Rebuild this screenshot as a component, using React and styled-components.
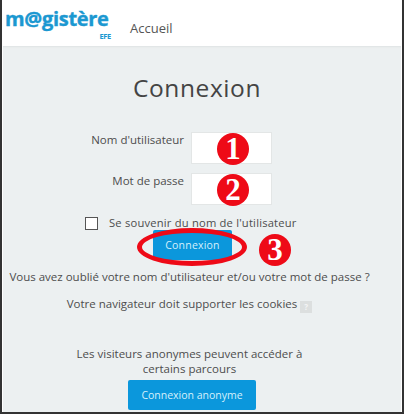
import React from 'react';
import styled, { createGlobalStyle } from 'styled-components';

const GlobalStyle = createGlobalStyle`
  html, body {
    margin: 0;
    padding: 0;
    background: #fff;
  }
  * {
    box-sizing: border-box;
  }
`;

const Frame = styled.div`
  width: 404px;
  height: 414px;
  border: solid #333;
  border-width: 0 2px 2px 2px;
  padding: 0 1px 0 1px;
  background: #fff;
  font-family: 'Open Sans', sans-serif;
  color: #444;
  display: flex;
  flex-direction: column;
`;

const Header = styled.header`
  height: 46px;
  display: flex;
  align-items: flex-start;
  flex-shrink: 0;
`;

const Logo = styled.div`
  width: 106px;
  margin-left: 2px;
  padding-top: 5px;
  display: flex;
  flex-direction: column;
  align-items: flex-end;
  color: #1b98d1;
`;

const LogoName = styled.div`
  font-family: 'Open Sans', sans-serif;
  font-size: 20px;
  font-weight: 700;
  line-height: 27px;
  letter-spacing: -0.3px;
  -webkit-text-stroke: 0.4px #1b98d1;
  width: 100%;
  white-space: nowrap;
`;

const LogoSub = styled.div`
  font-size: 7.5px;
  font-weight: 700;
  line-height: 8px;
  letter-spacing: -0.3px;
`;

const NavLink = styled.a`
  margin: 20px 0 0 19px;
  font-size: 13px;
  line-height: 17px;
  color: #555;
`;

const Main = styled.main`
  flex: 1;
  min-height: 0;
  position: relative;
  padding-right: 20px;
  background: #ecf0f1;
  box-shadow: inset 0 2px 2px -1px #dfe3e3;
  display: flex;
  flex-direction: column;
  align-items: center;
`;

const Title = styled.h1`
  margin: 27px 0 0;
  font-size: 24.5px;
  font-weight: 400;
  line-height: 30px;
  letter-spacing: 0.6px;
  color: #444;
  transform: translateX(5px);
`;

const Form = styled.form`
  margin-top: 29px;
  width: 100%;
  display: flex;
  flex-direction: column;
  gap: 9px;
`;

const Row = styled.div`
  display: flex;
  gap: 7px;
  justify-content: flex-start;
`;

const Label = styled.label`
  width: 181px;
  flex-shrink: 0;
  text-align: right;
  font-size: 11.5px;
  line-height: 14px;
  padding-top: 1px;
  color: #4d4d4d;
`;

const Input = styled.div`
  width: 81px;
  height: 32px;
  flex-shrink: 0;
  background: #fff;
  border: 1px solid #e3e6e6;
`;

const RememberRow = styled.div`
  margin: 2px 0 0 82px;
  display: flex;
  align-items: center;
  gap: 11px;
  font-size: 11.2px;
  line-height: 14px;
  letter-spacing: 0.2px;
  white-space: nowrap;
  color: #4d4d4d;
`;

const Checkbox = styled.span`
  width: 13px;
  height: 13px;
  background: #fff;
  border: 1px solid #555;
`;

const Button = styled.button`
  display: block;
  width: ${props => props.$width};
  height: 30px;
  margin: ${props => props.$margin || 0};
  padding: 0;
  border: 0;
  border-radius: 2px;
  background: #0b97dc;
  color: #d5f0fb;
  font-family: 'Open Sans', sans-serif;
  font-size: 10.5px;
  letter-spacing: ${props => props.$spacing || '0.2px'};
`;

const SubmitRow = styled.div`
  margin-top: -9px;
  padding-left: 150px;
`;

const Text = styled.p`
  margin: ${props => props.$margin || 0};
  width: 100%;
  padding-right: 5px;
  text-align: center;
  font-size: 11.5px;
  line-height: 15px;
  white-space: nowrap;
  color: #4d4d4d;
`;

const HelpIcon = styled.span`
  display: inline-block;
  width: 12px;
  height: 12px;
  margin-left: 3px;
  background: #dcdfdf;
  color: #f4f5f5;
  font-size: 8px;
  font-weight: 700;
  line-height: 12px;
  vertical-align: -2px;
`;

const Badge = styled.span`
  position: absolute;
  left: ${props => props.$x}px;
  top: ${props => props.$y}px;
  width: 32px;
  height: 32px;
  border-radius: 50%;
  background: #ee0a17;
  color: #fff;
  font-family: 'Liberation Serif', serif;
  font-size: 31px;
  font-weight: 700;
  line-height: 32px;
  text-align: center;
`;

const Ellipse = styled.span`
  position: absolute;
  left: 134px;
  top: 182px;
  width: 110px;
  height: 38px;
  border: 5px solid #ee0a17;
  border-radius: 50%;
`;

export default function App() {
  return (
    <>
      <GlobalStyle />
      <Frame>
        <Header>
          <Logo>
            <LogoName>m@gistère</LogoName>
            <LogoSub>EFE</LogoSub>
          </Logo>
          <NavLink>Accueil</NavLink>
        </Header>
        <Main>
          <Title>Connexion</Title>
          <Form>
            <Row>
              <Label>Nom d'utilisateur</Label>
              <Input />
            </Row>
            <Row>
              <Label>Mot de passe</Label>
              <Input />
            </Row>
            <RememberRow>
              <Checkbox />
              Se souvenir du nom de l'utilisateur
            </RememberRow>
            <SubmitRow>
              <Button $width="79px" type="button">Connexion</Button>
            </SubmitRow>
          </Form>
          <Text $margin="9px 0 0">Vous avez oublié votre nom d'utilisateur et/ou votre mot de passe ?</Text>
          <Text $margin="12px 0 0">
            Votre navigateur doit supporter les cookies<HelpIcon>?</HelpIcon>
          </Text>
          <Text $margin="33px 0 0">
            Les visiteurs anonymes peuvent accéder à
            <br />
            certains parcours
          </Text>
          <Button $width="128px" $margin="4px 0 0" $spacing="0" type="button">Connexion anonyme</Button>
          <Badge $x={214} $y={87}>1</Badge>
          <Badge $x={214} $y={128}>2</Badge>
          <Ellipse />
          <Badge $x={256} $y={188}>3</Badge>
        </Main>
      </Frame>
    </>
  );
}
